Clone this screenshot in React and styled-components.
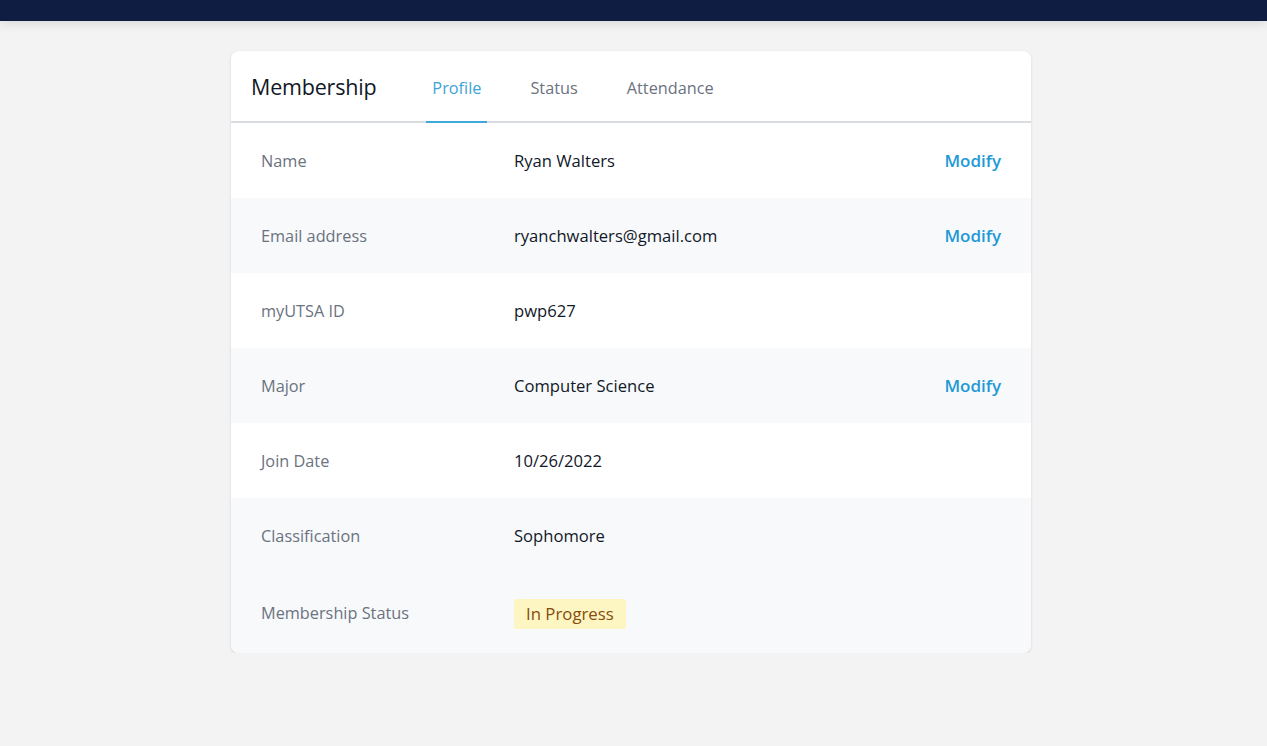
import React from "react";
import styled, { createGlobalStyle } from "styled-components";

const GlobalStyle = createGlobalStyle`
  html, body {
    margin: 0;
    padding: 0;
    background: #f3f3f3;
    font-family: "Open Sans", "Noto Sans", sans-serif;
  }
`;

const TopBar = styled.div`
  height: 21px;
  background: #0f1d42;
  box-shadow: 0 2px 12px rgba(0, 0, 0, 0.12);
  position: relative;
`;

const Page = styled.div`
  display: flex;
  justify-content: center;
  align-items: flex-start;
  padding-top: 30px;
`;

const Card = styled.div`
  width: 800px;
  background: #fff;
  border-radius: 8px;
  box-shadow: 0 1px 3px rgba(0, 0, 0, 0.12);
  overflow: hidden;
  margin-left: -5px;
`;

const Header = styled.div`
  display: flex;
  align-items: stretch;
  height: 70px;
  padding: 0 20px;
  border-bottom: 2px solid #d9dce1;
`;

const Title = styled.h2`
  margin: 0 50px 0 0;
  align-self: center;
  font-size: 21.5px;
  font-weight: 400;
  color: #111827;
  letter-spacing: -0.2px;
`;

const Tabs = styled.div`
  display: flex;
  gap: 37px;
`;

const Tab = styled.div`
  display: flex;
  align-items: center;
  padding: 3px 6px 0;
  font-size: 16.3px;
  color: ${(p) => (p.$active ? "#3ea3d6" : "#6b7280")};
  border-bottom: 2px solid ${(p) => (p.$active ? "#3ea8d8" : "transparent")};
  margin-bottom: -2px;
`;

const Row = styled.div`
  display: grid;
  grid-template-columns: 253px 1fr auto;
  align-items: center;
  height: ${(p) => (p.$last ? "80px" : "75px")};
  padding: 0 30px;
  background: ${(p) => (p.$shade ? "#f8f9fb" : "#fff")};
  font-size: 16px;
`;

const Label = styled.div`
  color: #6b7280;
  font-size: 16.3px;
`;

const Value = styled.div`
  color: #111827;
  font-size: 16.6px;
`;

const Modify = styled.a`
  color: #1e9ad6;
  font-weight: 600;
  font-size: 17px;
  cursor: pointer;
`;

const Badge = styled.span`
  display: inline-block;
  background: #fef6c2;
  color: #854d0e;
  font-size: 16.8px;
  line-height: 22px;
  padding: 4px 12px;
  border-radius: 2px;
  margin-top: 2px;
`;

const rows = [
  { label: "Name", value: "Ryan Walters", modify: true },
  { label: "Email address", value: "ryanchwalters@gmail.com", modify: true },
  { label: "myUTSA ID", value: "pwp627" },
  { label: "Major", value: "Computer Science", modify: true },
  { label: "Join Date", value: "10/26/2022" },
  { label: "Classification", value: "Sophomore" },
];

export default function App() {
  return (
    <>
      <GlobalStyle />
      <TopBar />
      <Page>
        <Card>
          <Header>
            <Title>Membership</Title>
            <Tabs>
              <Tab $active>Profile</Tab>
              <Tab>Status</Tab>
              <Tab>Attendance</Tab>
            </Tabs>
          </Header>
          {rows.map((r, i) => (
            <Row key={r.label} $shade={i % 2 === 1}>
              <Label>{r.label}</Label>
              <Value>{r.value}</Value>
              {r.modify ? <Modify>Modify</Modify> : <span />}
            </Row>
          ))}
          <Row $shade $last>
            <Label>Membership Status</Label>
            <div>
              <Badge>In Progress</Badge>
            </div>
            <span />
          </Row>
        </Card>
      </Page>
    </>
  );
}
